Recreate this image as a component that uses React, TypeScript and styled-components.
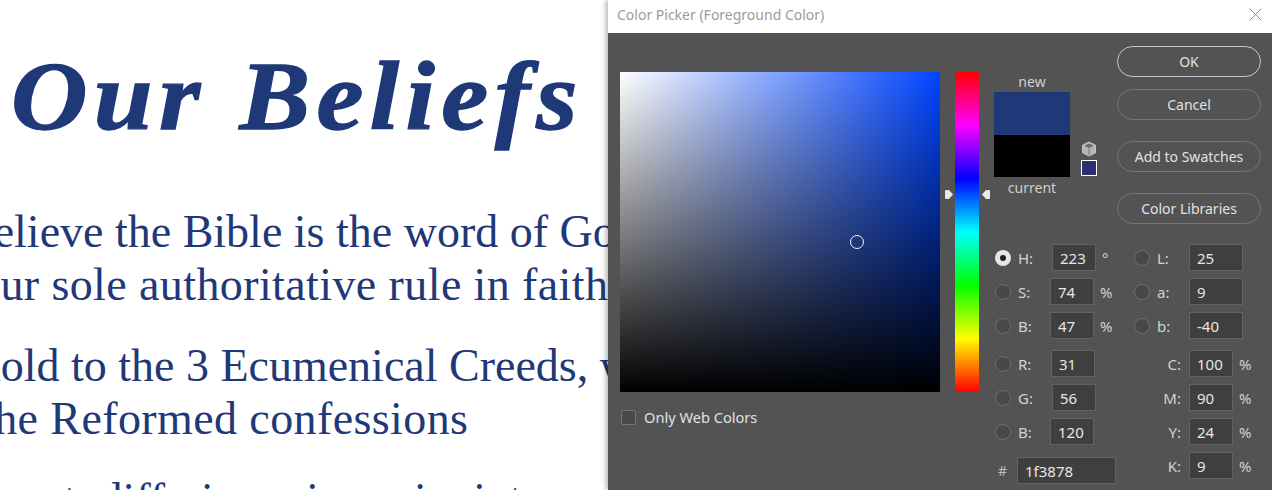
import React from "react";
import styled, { createGlobalStyle } from "styled-components";

const GlobalStyle = createGlobalStyle`
  html, body {
    margin: 0;
    padding: 0;
    height: 490px;
    overflow: hidden;
    background: #fff;
  }
`;

const Page = styled.div`
  display: flex;
  width: 1272px;
  height: 490px;
  overflow: hidden;
`;

const Article = styled.div`
  width: 608px;
  flex: none;
  overflow: hidden;
  color: #1f3878;
  font-family: "Liberation Serif", serif;
`;

const Heading = styled.h1`
  margin: 43px 0 0 11px;
  font-size: 98px;
  line-height: 106px;
  font-weight: 700;
  font-style: italic;
  letter-spacing: 5.9px;
  white-space: nowrap;
  -webkit-text-stroke: 1.3px #1f3878;
  transform: scaleX(1.08);
  transform-origin: left center;
`;

const Paragraph = styled.div<{ $top: number }>`
  margin-top: ${(p) => p.$top}px;
`;

const Line = styled.div<{ $shift: number; $spacing?: number; $words?: number }>`
  margin-left: ${(p) => p.$shift}px;
  font-size: 46px;
  line-height: 53px;
  white-space: nowrap;
  letter-spacing: ${(p) => p.$spacing ?? 0}px;
  word-spacing: ${(p) => p.$words ?? 0}px;
`;

const Dialog = styled.div`
  flex: 1;
  display: flex;
  flex-direction: column;
  box-shadow: -2px 0 5px rgba(0, 0, 0, 0.3);
  font-family: "Noto Sans", sans-serif;
  position: relative;
`;

const TitleBar = styled.div`
  height: 33px;
  flex: none;
  background: #fff;
  display: flex;
  align-items: center;
  justify-content: space-between;
  padding: 0 12px 5px 9px;
  box-sizing: border-box;
  color: #9b9b9b;
  font-size: 14px;
`;

const Body = styled.div`
  flex: 1;
  display: flex;
  background: #535353;
  padding: 13px 0 0 12px;
  min-height: 0;
`;

const PickerColumn = styled.div`
  width: 374px;
  flex: none;
  padding-top: 26px;
`;

const PickerRow = styled.div`
  display: flex;
  gap: 15px;
`;

const SaturationField = styled.div`
  position: relative;
  width: 320px;
  height: 320px;
  background: linear-gradient(to bottom, rgba(0, 0, 0, 0), #000),
    linear-gradient(to right, #fff, #0044ff);
`;

const PickerRing = styled.div`
  position: absolute;
  left: 230px;
  top: 163px;
  width: 12px;
  height: 12px;
  border: 1px solid #f4f4f4;
  border-radius: 50%;
`;

const HueBar = styled.div`
  position: relative;
  width: 24px;
  height: 320px;
  background: linear-gradient(
    to bottom,
    #f00 0%,
    #f0f 16.67%,
    #00f 33.33%,
    #0ff 50%,
    #0f0 66.67%,
    #ff0 83.33%,
    #f00 100%
  );
`;

const HueArrow = styled.svg<{ $side: "left" | "right" }>`
  position: absolute;
  top: 117px;
  width: 10px;
  height: 11px;
  ${(p) => (p.$side === "left" ? "left: -11px;" : "right: -12px;")}
`;

const WebColors = styled.label`
  display: flex;
  align-items: center;
  gap: 8px;
  margin-top: 15px;
  color: #e2e2e2;
  font-size: 14.6px;
`;

const CheckBox = styled.span`
  width: 15px;
  height: 15px;
  margin-left: 1px;
  box-sizing: border-box;
  border: 1px solid #757575;
  border-radius: 2px;
  background: #4a4a4a;
`;

const SideColumn = styled.div`
  flex: 1;
  display: flex;
  flex-direction: column;
  min-width: 0;
`;

const TopRow = styled.div`
  display: flex;
  height: 185px;
`;

const SwatchColumn = styled.div`
  width: 76px;
  flex: none;
  display: flex;
  flex-direction: column;
  align-items: center;
  margin-top: 25px;
  color: #cfcfcf;
  font-size: 14px;
  line-height: 21px;
`;

const Swatch = styled.div<{ $color: string; $height: number }>`
  width: 100%;
  height: ${(p) => p.$height}px;
  background: ${(p) => p.$color};
`;

const GamutColumn = styled.div`
  width: 47px;
  flex: none;
  display: flex;
  flex-direction: column;
  gap: 3px;
  padding: 95px 0 0 11px;
  box-sizing: border-box;
`;

const GamutSwatch = styled.div`
  width: 16px;
  height: 16px;
  box-sizing: border-box;
  border: 1px solid #fff;
  background: #2e2d6f;
`;

const Buttons = styled.div`
  display: flex;
  flex-direction: column;
`;

const Button = styled.button<{ $primary?: boolean; $top: number }>`
  width: 144px;
  height: 31px;
  margin-top: ${(p) => p.$top}px;
  padding: 0;
  background: transparent;
  border: 1px solid ${(p) => (p.$primary ? "#c8c8c8" : "#747474")};
  border-radius: 16px;
  color: #e2e2e2;
  font-family: inherit;
  font-size: 14px;
`;

const Form = styled.div`
  display: flex;
  margin: 13px 0 0 1px;
`;

const FormColumn = styled.div<{ $width: number }>`
  width: ${(p) => p.$width}px;
  flex: none;
  display: flex;
  flex-direction: column;
`;

const Row = styled.div<{ $top: number }>`
  display: flex;
  align-items: center;
  height: 27px;
  margin-top: ${(p) => p.$top}px;
  color: #d2d2d2;
  font-size: 15px;
`;

const Radio = styled.span<{ $checked?: boolean }>`
  width: 16px;
  height: 16px;
  flex: none;
  box-sizing: border-box;
  border-radius: 50%;
  border: ${(p) => (p.$checked ? "5px solid #e6e6e6" : "1px solid #6e6e6e")};
  background: ${(p) => (p.$checked ? "#222" : "#484848")};
`;

const FieldLabel = styled.span<{ $width: number; $right?: boolean }>`
  width: ${(p) => p.$width}px;
  flex: none;
  box-sizing: border-box;
  text-align: ${(p) => (p.$right ? "right" : "left")};
  padding-left: ${(p) => (p.$right ? 0 : 7)}px;
  padding-right: ${(p) => (p.$right ? 8 : 0)}px;
`;

const HashLabel = styled.span`
  width: 22px;
  flex: none;
  padding-left: 3px;
  box-sizing: border-box;
  color: #bdbdbd;
  font-size: 14px;
`;

const Field = styled.div<{ $width: number }>`
  width: ${(p) => p.$width}px;
  height: 27px;
  flex: none;
  box-sizing: border-box;
  border: 1px solid #626262;
  background: #3f3f3f;
  color: #e6e6e6;
  font-size: 15px;
  line-height: 26px;
  padding-left: 7px;
`;

const Unit = styled.span`
  margin-left: 6px;
`;

type FieldRow = {
  label: string;
  value: string;
  unit?: string;
  labelWidth: number;
  top: number;
  checked?: boolean;
};

const hsbRgb: FieldRow[] = [
  { label: "H:", value: "223", unit: "°", labelWidth: 41, top: 0, checked: true },
  { label: "S:", value: "74", unit: "%", labelWidth: 39, top: 7 },
  { label: "B:", value: "47", unit: "%", labelWidth: 39, top: 7 },
  { label: "R:", value: "31", labelWidth: 40, top: 11 },
  { label: "G:", value: "56", labelWidth: 41, top: 7 },
  { label: "B:", value: "120", labelWidth: 39, top: 7 },
];

const lab: FieldRow[] = [
  { label: "L:", value: "25", labelWidth: 39, top: 0 },
  { label: "a:", value: "9", labelWidth: 39, top: 7 },
  { label: "b:", value: "-40", labelWidth: 39, top: 7 },
];

const cmyk: FieldRow[] = [
  { label: "C:", value: "100", unit: "%", labelWidth: 55, top: 11 },
  { label: "M:", value: "90", unit: "%", labelWidth: 55, top: 7 },
  { label: "Y:", value: "24", unit: "%", labelWidth: 55, top: 7 },
  { label: "K:", value: "9", unit: "%", labelWidth: 55, top: 7 },
];

export default function App() {
  return (
    <Page>
      <GlobalStyle />
      <Article>
        <Heading>Our Beliefs</Heading>
        <Paragraph $top={56}>
          <Line $shift={-101}>We believe the Bible is the word of God</Line>
          <Line $shift={-23} $spacing={0.4}>our sole authoritative rule in faith</Line>
        </Paragraph>
        <Paragraph $top={28}>
          <Line $shift={-94}>We hold to the 3 Ecumenical Creeds, with</Line>
          <Line $shift={-19} $spacing={0.4}>the Reformed confessions</Line>
        </Paragraph>
        <Paragraph $top={28}>
          <Line $shift={-125} $words={12}>We accept differing views in interpretation</Line>
        </Paragraph>
      </Article>
      <Dialog>
        <TitleBar>
          Color Picker (Foreground Color)
          <svg width="13" height="13" viewBox="0 0 13 13">
            <path d="M0.5 0.5 L12.5 12.5 M12.5 0.5 L0.5 12.5" stroke="#8c8c8c" strokeWidth="1" fill="none" />
          </svg>
        </TitleBar>
        <Body>
          <PickerColumn>
            <PickerRow>
              <SaturationField>
                <PickerRing />
              </SaturationField>
              <HueBar>
                <HueArrow $side="left" viewBox="0 0 10 11">
                  <path d="M1 2 Q1 1 2 1 L5 1 L9 5.5 L5 10 L2 10 Q1 10 1 9 Z" fill="#e8e8e8" />
                </HueArrow>
                <HueArrow $side="right" viewBox="0 0 10 11">
                  <path d="M9 2 Q9 1 8 1 L5 1 L1 5.5 L5 10 L8 10 Q9 10 9 9 Z" fill="#e8e8e8" />
                </HueArrow>
              </HueBar>
            </PickerRow>
            <WebColors>
              <CheckBox />
              Only Web Colors
            </WebColors>
          </PickerColumn>
          <SideColumn>
            <TopRow>
              <SwatchColumn>
                <span>new</span>
                <Swatch $color="#1f3878" $height={43} />
                <Swatch $color="#000" $height={42} />
                <span>current</span>
              </SwatchColumn>
              <GamutColumn>
                <svg width="16" height="16" viewBox="0 0 16 16">
                  <path d="M8 1 L14.5 4.2 L14.5 11.8 L8 15 L1.5 11.8 L1.5 4.2 Z" fill="#b4b4b4" stroke="#c8c8c8" strokeWidth="1" />
                  <path d="M8 2.6 L12.6 4.8 L8 7 L3.4 4.8 Z" fill="#6c6c6c" />
                  <path d="M8 7.4 L8 14.4" stroke="#7a7a7a" strokeWidth="1" />
                </svg>
                <GamutSwatch />
              </GamutColumn>
              <Buttons>
                <Button $primary $top={0}>OK</Button>
                <Button $top={12}>Cancel</Button>
                <Button $top={21}>Add to Swatches</Button>
                <Button $top={21}>Color Libraries</Button>
              </Buttons>
            </TopRow>
            <Form>
              <FormColumn $width={139}>
                {hsbRgb.map((row) => (
                  <Row key={row.label + row.value} $top={row.top}>
                    <Radio $checked={row.checked} />
                    <FieldLabel $width={row.labelWidth}>{row.label}</FieldLabel>
                    <Field $width={44}>{row.value}</Field>
                    {row.unit && <Unit>{row.unit}</Unit>}
                  </Row>
                ))}
                <Row $top={12}>
                  <HashLabel>#</HashLabel>
                  <Field $width={99}>1f3878</Field>
                </Row>
              </FormColumn>
              <FormColumn $width={140}>
                {lab.map((row) => (
                  <Row key={row.label} $top={row.top}>
                    <Radio />
                    <FieldLabel $width={row.labelWidth}>{row.label}</FieldLabel>
                    <Field $width={54}>{row.value}</Field>
                  </Row>
                ))}
                {cmyk.map((row) => (
                  <Row key={row.label} $top={row.top}>
                    <FieldLabel $right $width={row.labelWidth}>{row.label}</FieldLabel>
                    <Field $width={44}>{row.value}</Field>
                    <Unit>{row.unit}</Unit>
                  </Row>
                ))}
              </FormColumn>
            </Form>
          </SideColumn>
        </Body>
      </Dialog>
    </Page>
  );
}
